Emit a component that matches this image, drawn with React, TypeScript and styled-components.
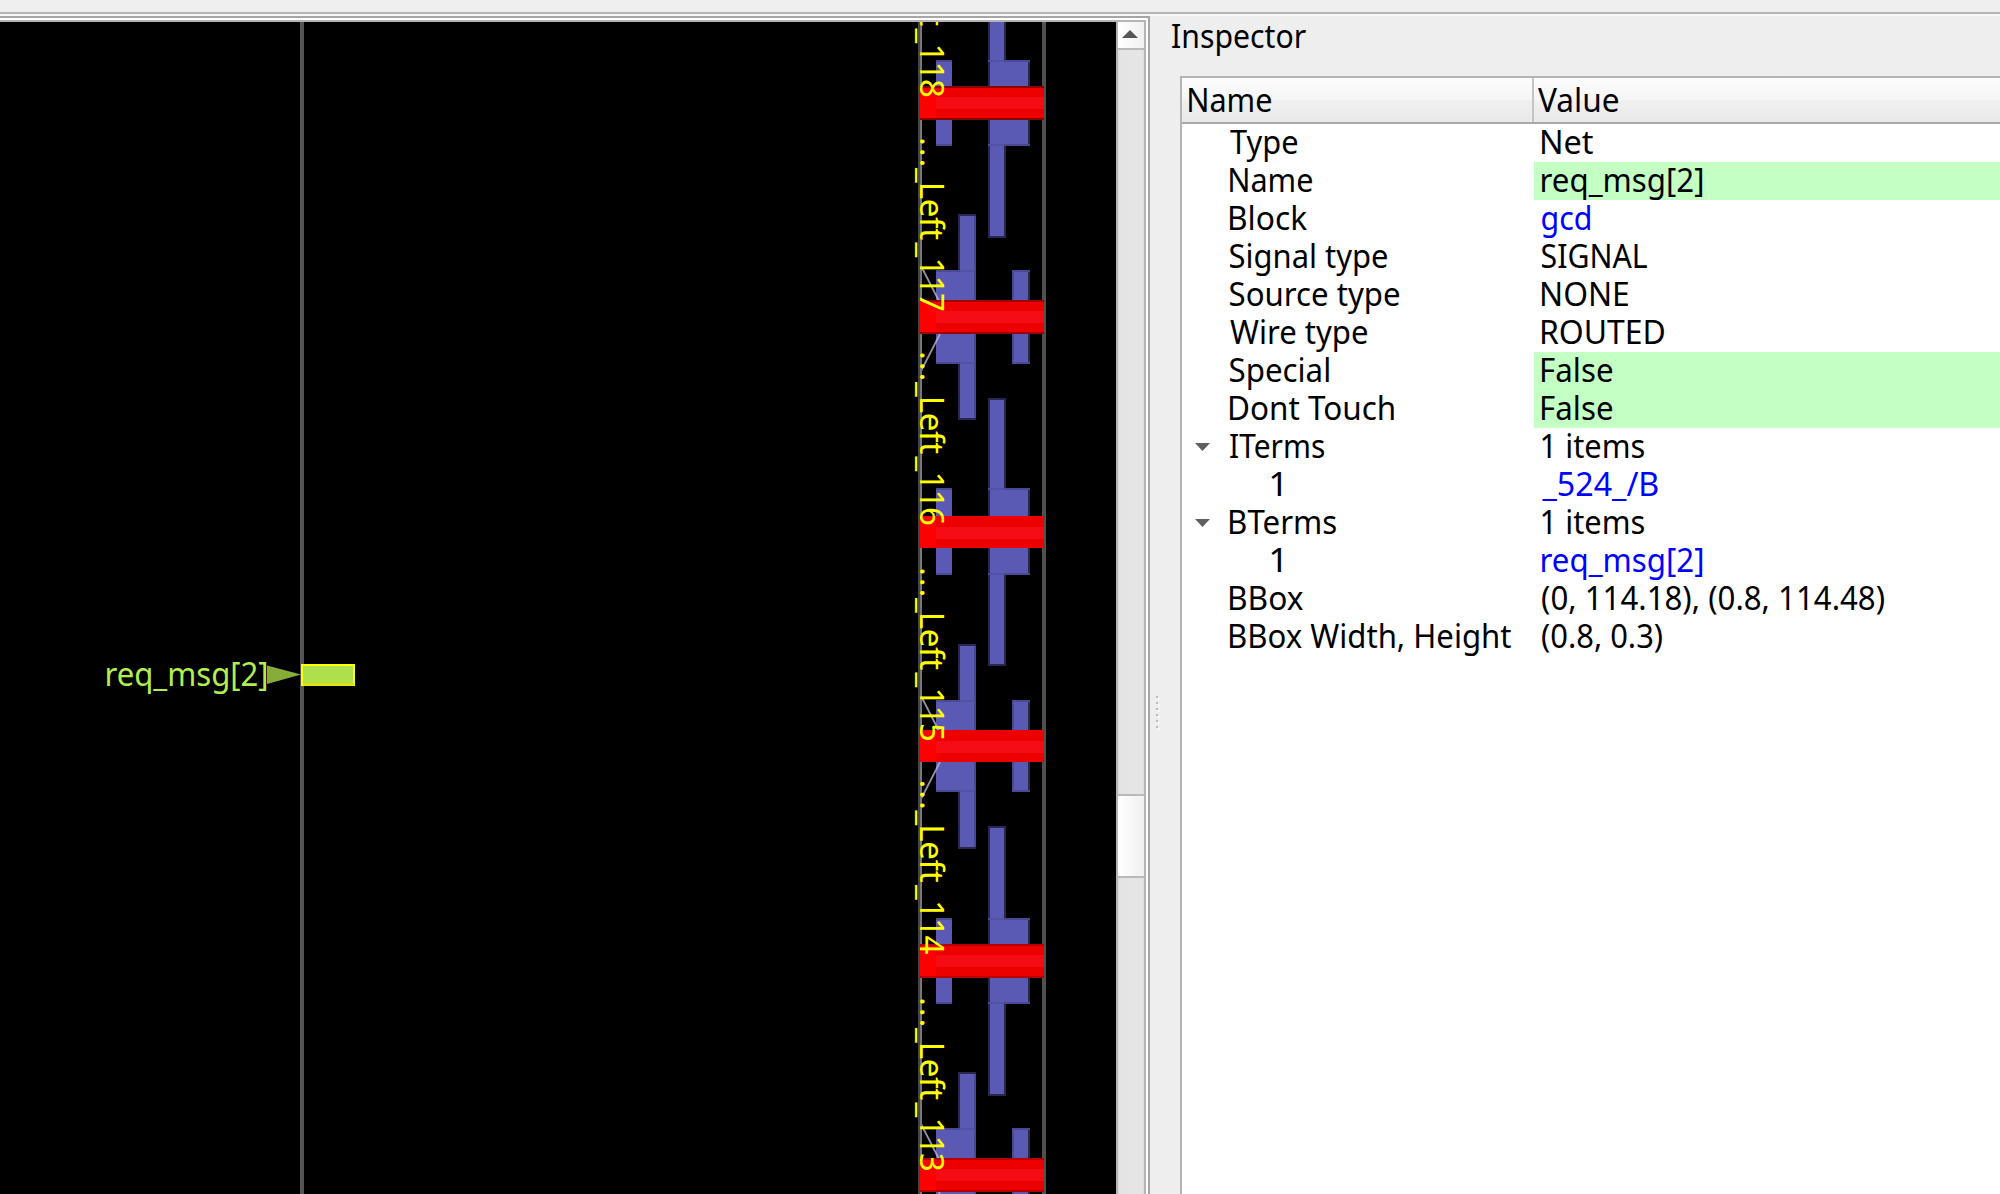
import React, { useMemo } from "react";
import styled, { createGlobalStyle } from "styled-components";

const FONT = '"Noto Sans", "Open Sans", sans-serif';
const FONT_SIZE = 33;

const GlobalStyle = createGlobalStyle`
  html, body { margin: 0; padding: 0; overflow: hidden; background: #eeeeee; }
  * { box-sizing: border-box; }
`;

const Window = styled.div`
  display: flex;
  flex-direction: column;
  width: 2000px;
  height: 1194px;
  background: #eeeeee;
  color: #000;
  font-family: ${FONT};
  font-size: ${FONT_SIZE}px;
  overflow: hidden;
`;

const ToolbarEdge = styled.div`
  flex: none;
  height: 16px;
  background: linear-gradient(#f0f0f0, #eeeeee);
  background-clip: padding-box;
  border-bottom: 2px solid #f7f7f7;
  box-shadow: inset 0 -2px 0 #b4b4b4;
`;

const Workspace = styled.div`
  display: flex;
  flex: 1;
  min-height: 0;
`;

const ViewFrame = styled.div`
  flex: none;
  width: 1150px;
  border-top: 2px solid #a6a6a6;
  border-right: 2px solid #a6a6a6;
  background: #fff;
  padding: 2px 2px 0 0;
`;

const ViewBody = styled.div`
  display: flex;
  height: 100%;
  border-top: 2px solid #b4b4b4;
  border-right: 2px solid #b4b4b4;
`;

const Canvas = styled.svg`
  display: block;
  flex: none;
  width: 1116px;
  height: 1172px;
  background: #000;
`;

const ScrollBar = styled.div`
  flex: 1;
  display: flex;
  flex-direction: column;
  border-left: 2px solid #b4b4b4;
  background: linear-gradient(90deg, #dadada, #e4e4e4 2px, #e6e6e6 23px, #dedede);
`;

const ScrollButton = styled.div`
  flex: none;
  height: 28px;
  display: flex;
  justify-content: center;
  padding-top: 8px;
  border-bottom: 2px solid #b9b9b9;
  background: linear-gradient(90deg, #ffffff, #f1f1f1);
  svg { display: block; width: 16px; height: 8px; margin-right: 2px; }
`;

const ScrollThumb = styled.div`
  flex: none;
  height: 84px;
  margin-top: 744px;
  border: solid #b9b9b9;
  border-width: 2px 0;
  background: linear-gradient(90deg, #ffffff, #f0f0f0);
`;

const Splitter = styled.div`
  flex: none;
  width: 14px;
  margin-right: 2px;
  display: flex;
  flex-direction: column;
  align-items: center;
  gap: 4px;
  padding-top: 680px;
`;

const GripDot = styled.div`
  width: 2px;
  height: 2px;
  background: #bbbbbb;
  box-shadow: 2px 2px 0 #f8f8f8;
`;

const Inspector = styled.div`
  flex: 1;
  min-width: 0;
  display: flex;
  flex-direction: column;
`;

const PanelTitle = styled.div`
  flex: none;
  height: 60px;
  padding: 1px 0 0 5.5px;
  line-height: 38px;
`;

const Tree = styled.div`
  flex: 1;
  margin-left: 14px;
  border: solid #b4b4b4;
  border-width: 2px 0 0 2px;
  background: #fff;
`;

const Header = styled.div`
  display: grid;
  grid-template-columns: 352px 1fr;
  height: 46px;
  border-bottom: 2px solid #a9a9a9;
  background: linear-gradient(#fcfcfc, #f5f5f5 50%, #f0f0f0 51%, #e9e9e9);
`;

const HeaderCell = styled.div<{ $inset: number; $divider?: boolean }>`
  padding: 3px 0 0 ${(p) => p.$inset}px;
  line-height: 38px;
  border-right: ${(p) => (p.$divider ? "2px solid #c4c4c4" : "none")};
`;

const Row = styled.div`
  display: grid;
  grid-template-columns: 352px 1fr;
  height: 38px;
  line-height: 36px;
`;

const NameCell = styled.div<{ $child?: boolean }>`
  display: flex;
  padding-left: ${(p) => (p.$child ? 41 : 0)}px;
`;

const Branch = styled.div`
  flex: none;
  width: 48px;
  padding: 15px 0 0 13px;
  svg { display: block; width: 15px; height: 8px; }
`;

const ValueCell = styled.div<{ $editable?: boolean; $link?: boolean }>`
  padding-left: 8px;
  background: ${(p) => (p.$editable ? "#c4ffc3" : "transparent")};
  color: ${(p) => (p.$link ? "#0000ff" : "#000")};
`;

const TextRun = styled.span`
  display: inline-block;
  height: 38px;
  white-space: pre;
  transform-origin: 0 0;
  vertical-align: top;
`;

/** A label condensed so that its ink spans exactly `width` pixels. */
function Label({ text, width }: { text: string; width: number }) {
  const transform = useMemo(() => {
    const ctx = document.createElement("canvas").getContext("2d")!;
    // Measured at ten times the size, since ink bounds come in whole pixels.
    ctx.font = `${FONT_SIZE * 10}px ${FONT}`;
    const m = ctx.measureText(text);
    const left = m.actualBoundingBoxLeft / 10;
    const right = m.actualBoundingBoxRight / 10;
    const scale = width / (left + right);
    return `translateX(${left * scale}px) scaleX(${scale})`;
  }, [text, width]);
  return <TextRun style={{ transform }}>{text}</TextRun>;
}

type Prop = {
  name: string;
  nameWidth: number;
  value: string;
  valueWidth: number;
  editable?: boolean;
  link?: boolean;
  open?: boolean;
  child?: boolean;
};

const PROPS: Prop[] = [
  { name: "Type", nameWidth: 67, value: "Net", valueWidth: 51 },
  { name: "Name", nameWidth: 82, value: "req_msg[2]", valueWidth: 160, editable: true },
  { name: "Block", nameWidth: 77, value: "gcd", valueWidth: 48, link: true },
  { name: "Signal type", nameWidth: 157, value: "SIGNAL", valueWidth: 105 },
  { name: "Source type", nameWidth: 169, value: "NONE", valueWidth: 86 },
  { name: "Wire type", nameWidth: 137, value: "ROUTED", valueWidth: 122 },
  { name: "Special", nameWidth: 99, value: "False", valueWidth: 70, editable: true },
  { name: "Dont Touch", nameWidth: 164, value: "False", valueWidth: 70, editable: true },
  { name: "ITerms", nameWidth: 94, value: "1 items", valueWidth: 102, open: true },
  { name: "1", nameWidth: 10, value: "_524_/B", valueWidth: 116, child: true, link: true },
  { name: "BTerms", nameWidth: 106, value: "1 items", valueWidth: 102, open: true },
  { name: "1", nameWidth: 10, value: "req_msg[2]", valueWidth: 160, child: true, link: true },
  { name: "BBox", nameWidth: 73, value: "(0, 114.18), (0.8, 114.48)", valueWidth: 342 },
  { name: "BBox Width, Height", nameWidth: 281, value: "(0.8, 0.3)", valueWidth: 120 },
];

type Cell = {
  odd: boolean;
  start: number;
  top: number;
  bottom: number;
  end: number;
  red: number;
  redEnd: number;
  edge: string;
};

const CELLS: Cell[] = [
  { odd: false, start: 0, top: 60, bottom: 146, end: 238, red: 86, redEnd: 120, edge: "#8a0000" },
  { odd: true, start: 214, top: 270, bottom: 364, end: 420, red: 300, redEnd: 334, edge: "#a00000" },
  { odd: false, start: 398, top: 488, bottom: 575, end: 666, red: 516, redEnd: 548, edge: "#ee0000" },
  { odd: true, start: 644, top: 700, bottom: 792, end: 849, red: 730, redEnd: 762, edge: "#ee0000" },
  { odd: false, start: 826, top: 918, bottom: 1004, end: 1096, red: 944, redEnd: 978, edge: "#b80000" },
  { odd: true, start: 1072, top: 1128, bottom: 1222, end: 1280, red: 1158, redEnd: 1192, edge: "#b80000" },
];

const INSTANCES = [
  { id: 118, y: -77 },
  { id: 117, y: 137 },
  { id: 116, y: 351 },
  { id: 115, y: 567 },
  { id: 114, y: 779.5 },
  { id: 113, y: 997 },
];

const GLYPH_OFFSETS = "0 10.7 21.4 31 44.7 61.7 80 91.2 105.5 120.5 138.5 156";

const BODY = "#5a5ab4";
const RIM = "#28284f";
const SOFT_RIM = "#4a4a94";

type MetalProps = { x: number; y: number; w: number; h: number; left?: string; right?: string; cap?: string };

function Metal({ x, y, w, h, left = RIM, right = RIM, cap = RIM }: MetalProps) {
  return (
    <>
      <rect x={x} y={y} width={w} height={h} fill={cap} />
      <rect x={x} y={y + 2} width={2} height={h - 4} fill={left} />
      <rect x={x + w - 2} y={y + 2} width={2} height={h - 4} fill={right} />
      <rect x={x + 2} y={y + 2} width={w - 4} height={h - 4} fill={BODY} />
    </>
  );
}

function CellShapes({ c }: { c: Cell }) {
  const h = c.bottom - c.top;
  const spineX = c.odd ? 958 : 988;
  const spineRight = c.odd ? SOFT_RIM : RIM;
  return (
    <g>
      <Metal x={spineX} y={c.start} w={18} h={c.top - c.start + 4} right={spineRight} />
      <Metal x={spineX} y={c.bottom - 4} w={18} h={c.end - c.bottom + 4} right={spineRight} />
      {c.odd ? (
        <>
          <Metal x={936} y={c.top} w={40} h={h} left={BODY} right={SOFT_RIM} cap={SOFT_RIM} />
          <Metal x={1012} y={c.top} w={18} h={h} left={SOFT_RIM} cap={SOFT_RIM} />
          <path
            d={`M919 ${c.top - 8}L939.5 ${c.red + 2}M940 ${c.redEnd}L920 ${c.redEnd + 39}`}
            stroke="#b8b8d0"
            strokeWidth="1.8"
            strokeOpacity="0.8"
            fill="none"
          />
        </>
      ) : (
        <>
          <Metal x={936} y={c.top} w={16} h={h} left={BODY} right={BODY} cap={SOFT_RIM} />
          <Metal x={988} y={c.top} w={42} h={h} cap={SOFT_RIM} />
        </>
      )}
      <rect x={spineX + 2} y={c.top} width={14} height={2} fill="#5252a4" />
      <rect x={spineX + 2} y={c.bottom - 2} width={14} height={2} fill="#5252a4" />
    </g>
  );
}

function Rail({ c }: { c: Cell }) {
  const h = c.redEnd - c.red;
  return (
    <g>
      <rect x={920} y={c.red} width={124} height={h} fill={c.edge} />
      <rect x={920} y={c.red + 2} width={124} height={h - 4} fill="#ec0000" />
      <rect x={936} y={c.red + 11} width={108} height={12} fill="#f50c14" />
      <rect x={920} y={c.red + 2} width={16} height={h - 4} fill="#ff0000" />
    </g>
  );
}

function LayoutView() {
  return (
    <Canvas viewBox="0 22 1116 1172">
      <rect x="300" y="22" width="4" height="1172" fill="#555555" />
      {CELLS.map((c) => (
        <CellShapes key={c.start} c={c} />
      ))}
      <rect x="918" y="22" width="2" height="1172" fill="#444444" />
      <rect x="920" y="22" width="2" height="1172" fill="#77777b" />
      <rect x="1042" y="22" width="4" height="1172" fill="#505050" />
      {CELLS.map((c) => (
        <Rail key={c.start} c={c} />
      ))}
      {INSTANCES.map((n) => (
        <text
          key={n.id}
          x={GLYPH_OFFSETS}
          y="0"
          transform={`translate(920 ${n.y}) rotate(90)`}
          fontFamily={FONT}
          fontSize="33"
          fill="#ffff00"
        >
          {`..._Left_${n.id}`}
        </text>
      ))}
      <text
        x="104.5"
        y="685.5"
        fontFamily={FONT}
        fontSize="33"
        fill="#b4ee4e"
        textLength="164"
        lengthAdjust="spacingAndGlyphs"
      >
        req_msg[2]
      </text>
      <path d="M267 665.5L301 674.5L267 684Z" fill="#88ac38" />
      <rect x="302" y="665" width="52" height="20" fill="#ade04a" stroke="#ffff00" strokeWidth="2" />
      <rect x="303" y="683" width="51" height="2.6" fill="#dcdf1c" />
    </Canvas>
  );
}

export default function App() {
  return (
    <Window>
      <GlobalStyle />
      <ToolbarEdge />
      <Workspace>
        <ViewFrame>
          <ViewBody>
            <LayoutView />
            <ScrollBar>
              <ScrollButton>
                <svg viewBox="0 0 16 8">
                  <path d="M8 0L16 8H0Z" fill="#555" />
                </svg>
              </ScrollButton>
              <ScrollThumb />
            </ScrollBar>
          </ViewBody>
        </ViewFrame>
        <Splitter>
          {[0, 1, 2, 3, 4, 5].map((i) => (
            <GripDot key={i} />
          ))}
        </Splitter>
        <Inspector>
          <PanelTitle>
            <Label text="Inspector" width={134} />
          </PanelTitle>
          <Tree>
            <Header>
              <HeaderCell $inset={7} $divider>
                <Label text="Name" width={82} />
              </HeaderCell>
              <HeaderCell $inset={4}>
                <Label text="Value" width={80} />
              </HeaderCell>
            </Header>
            {PROPS.map((p, i) => (
              <Row key={i}>
                <NameCell $child={p.child}>
                  <Branch>
                    {p.open && (
                      <svg viewBox="0 0 15 8">
                        <path d="M0 0H15L7.5 8Z" fill="#606060" />
                      </svg>
                    )}
                  </Branch>
                  <Label text={p.name} width={p.nameWidth} />
                </NameCell>
                <ValueCell $editable={p.editable} $link={p.link}>
                  <Label text={p.value} width={p.valueWidth} />
                </ValueCell>
              </Row>
            ))}
          </Tree>
        </Inspector>
      </Workspace>
    </Window>
  );
}
